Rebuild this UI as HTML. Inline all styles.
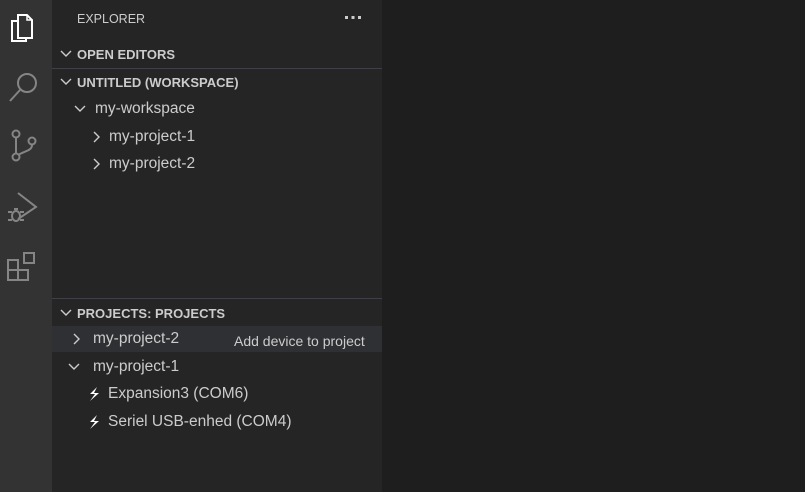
<!DOCTYPE html>
<html><head><style>
*{margin:0;padding:0;box-sizing:border-box}
body{width:805px;height:492px;background:#1e1e1e;font-family:"Liberation Sans",sans-serif;overflow:hidden;position:relative}
#act{position:absolute;left:0;top:0;width:52px;height:492px;background:#333333}
#side{position:absolute;left:52px;top:0;width:330px;height:492px;background:#252526;color:#cccccc}
.t{position:absolute;white-space:nowrap;font-size:15.5px;line-height:20px}
.h{position:absolute;white-space:nowrap;font-size:13px;font-weight:bold;line-height:16px;color:#cccccc}
.line{position:absolute;left:0;width:330px;height:1px;background:#3f3f46}
svg{position:absolute}
</style></head><body>
<div id="act">
<svg style="left:8px;top:10px" width="28" height="32" viewBox="0 0 28 32" fill="none" stroke="#fff" stroke-width="2"><path d="M10 5h9l5 5v18H10z"/><path d="M19 5v5h5" stroke-width="1.5"/><path d="M10 11H4v20h14v-3"/></svg>
<svg style="left:8px;top:70px" width="32" height="34" viewBox="0 0 32 34" fill="none" stroke="#858585" stroke-width="2"><circle cx="19" cy="13" r="9"/><path d="M12 20L2 31"/></svg>
<svg style="left:8px;top:128px" width="30" height="36" viewBox="0 0 30 36" fill="none" stroke="#858585" stroke-width="2"><circle cx="8" cy="6" r="3.5"/><circle cx="8" cy="29" r="3.5"/><circle cx="24" cy="13" r="3.5"/><path d="M8 10v15M24 17c0 6-8 6-14 10"/></svg>
<svg style="left:6px;top:190px" width="34" height="36" viewBox="0 0 34 36" fill="none" stroke="#858585" stroke-width="2"><path d="M12 3l18 14-18 12"/><ellipse cx="10" cy="26" rx="4" ry="5"/><path d="M2 22h4M2 30h4M14 22h4M14 30h4M8 19h4"/></svg>
<svg style="left:6px;top:250px" width="34" height="34" viewBox="0 0 34 34" fill="none" stroke="#858585" stroke-width="2"><rect x="2" y="10" width="10" height="10"/><rect x="2" y="20" width="10" height="10"/><rect x="12" y="20" width="10" height="10"/><rect x="18" y="3" width="10" height="10"/></svg>
</div>
<div id="side">
<div class="t" style="left:25px;top:9px;font-size:12.5px">EXPLORER</div>
<svg style="left:292px;top:16px" width="20" height="4" viewBox="0 0 20 4" fill="#ccc"><rect x="1" y="0" width="3" height="3"/><rect x="7.5" y="0" width="3" height="3"/><rect x="14" y="0" width="3" height="3"/></svg>
<svg style="left:8px;top:49px" width="12" height="10" viewBox="0 0 12 10" fill="none" stroke="#ccc" stroke-width="1.4"><path d="M1 2l5 5 5-5"/></svg>
<div class="h" style="left:25px;top:47px">OPEN EDITORS</div>
<div class="line" style="top:68px"></div>
<svg style="left:8px;top:77px" width="12" height="10" viewBox="0 0 12 10" fill="none" stroke="#ccc" stroke-width="1.4"><path d="M1 2l5 5 5-5"/></svg>
<div class="h" style="left:25px;top:75px">UNTITLED (WORKSPACE)</div>
<svg style="left:22px;top:104px" width="12" height="10" viewBox="0 0 12 10" fill="none" stroke="#ccc" stroke-width="1.4"><path d="M1 2l5 5 5-5"/></svg>
<div class="t" style="left:43px;top:99px">my-workspace</div>
<svg style="left:40px;top:131px" width="10" height="12" viewBox="0 0 10 12" fill="none" stroke="#ccc" stroke-width="1.4"><path d="M2 1l5 5-5 5"/></svg>
<div class="t" style="left:57px;top:127px">my-project-1</div>
<svg style="left:40px;top:158px" width="10" height="12" viewBox="0 0 10 12" fill="none" stroke="#ccc" stroke-width="1.4"><path d="M2 1l5 5-5 5"/></svg>
<div class="t" style="left:57px;top:154px">my-project-2</div>
<div class="line" style="top:298px"></div>
<svg style="left:8px;top:308px" width="12" height="10" viewBox="0 0 12 10" fill="none" stroke="#ccc" stroke-width="1.4"><path d="M1 2l5 5 5-5"/></svg>
<div class="h" style="left:25px;top:306px">PROJECTS: PROJECTS</div>
<div style="position:absolute;left:0;top:326px;width:330px;height:26px;background:#2f3033"></div>
<svg style="left:20px;top:333px" width="10" height="12" viewBox="0 0 10 12" fill="none" stroke="#ccc" stroke-width="1.4"><path d="M2 1l5 5-5 5"/></svg>
<div class="t" style="left:41px;top:329px">my-project-2</div>
<div class="t" style="left:182px;top:331px;font-size:14px">Add device to project</div>
<svg style="left:16px;top:362px" width="12" height="10" viewBox="0 0 12 10" fill="none" stroke="#ccc" stroke-width="1.4"><path d="M1 2l5 5 5-5"/></svg>
<div class="t" style="left:41px;top:357px">my-project-1</div>
<svg style="left:35px;top:386px" width="14" height="16" viewBox="0 0 14 16"><path d="M10 1L3 8h5l-5 7 9-8H7z" fill="#fff"/></svg>
<div class="t" style="left:56px;top:384px">Expansion3 (COM6)</div>
<svg style="left:35px;top:414px" width="14" height="16" viewBox="0 0 14 16"><path d="M10 1L3 8h5l-5 7 9-8H7z" fill="#fff"/></svg>
<div class="t" style="left:56px;top:412px">Seriel USB-enhed (COM4)</div>
</div>
</body></html>
